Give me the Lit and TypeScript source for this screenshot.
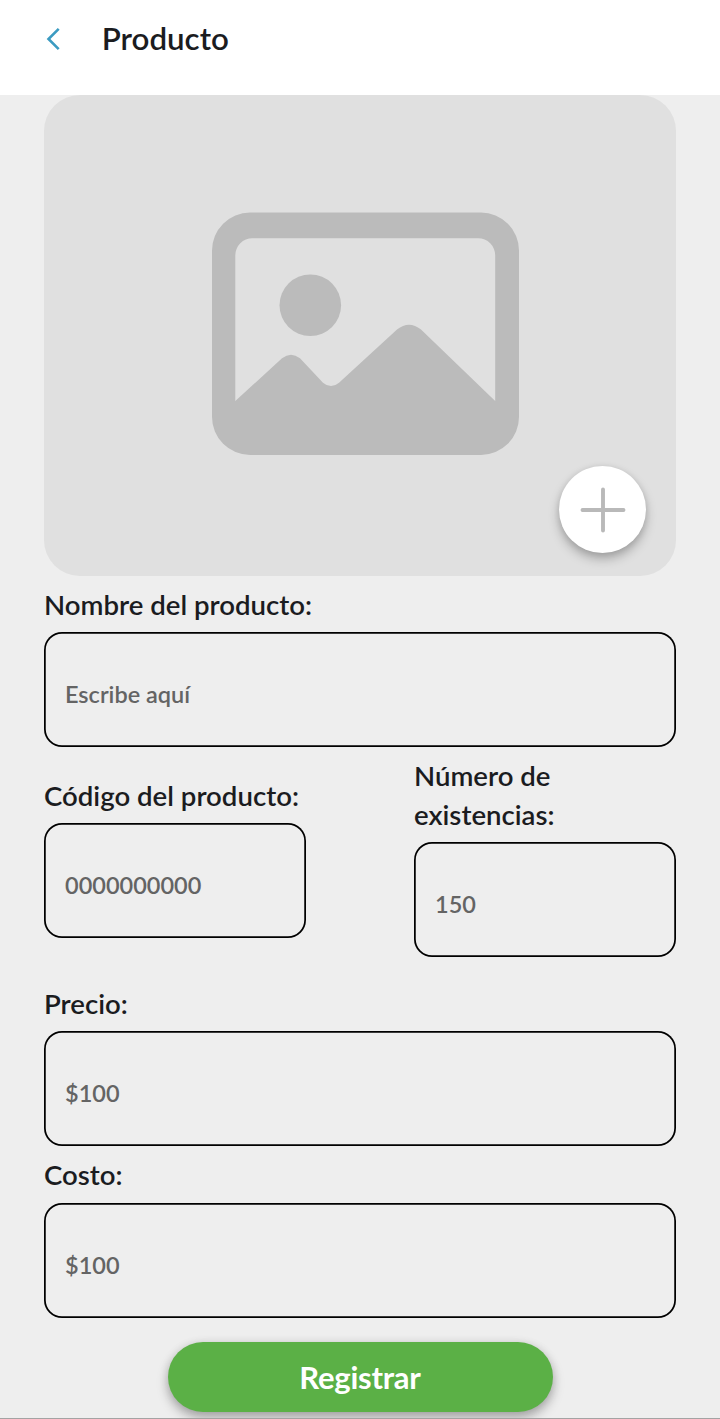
import { LitElement, html, css } from "lit";
import { customElement, property } from "lit/decorators.js";

@customElement("form-field")
class FormField extends LitElement {
  @property() label = "";
  @property() placeholder = "";

  static styles = css`
    :host { display: block; }
    .label {
      display: block;
      margin-bottom: var(--label-gap, 8px);
      font-size: 27.6px;
      font-weight: 600;
      line-height: 39px;
      color: #1b1c1f;
    }
    .input {
      display: block;
      box-sizing: border-box;
      width: 100%;
      height: 115px;
      margin: 0;
      padding: 9px 21px 0;
      border: 0;
      border-radius: 18px;
      outline: none;
      background: transparent;
      box-shadow: inset 0 0 0 1.75px #000;
      font: 600 23.5px Lato, sans-serif;
      color: #1b1c1f;
    }
    .input::placeholder { color: #646464; opacity: 1; }
  `;

  render() {
    return html`
      <label class="label" for="control">${this.label}</label>
      <input class="input" id="control" placeholder=${this.placeholder} />
    `;
  }
}

@customElement("app-root")
class AppRoot extends LitElement {
  static styles = css`
    :host {
      display: flex;
      flex-direction: column;
      box-sizing: border-box;
      height: 1419px;
      overflow: hidden;
      background: #eeeeee;
      border-bottom: 1px solid #a3a3a3;
      font-family: Lato, sans-serif;
    }
    .header {
      display: flex;
      flex: none;
      align-items: center;
      box-sizing: border-box;
      height: 95px;
      padding: 0 46px 17px;
      background: #fff;
    }
    .back { display: block; width: 16px; height: 24px; }
    .title {
      margin: 0 0 2px 39.7px;
      font-size: 31.3px;
      font-weight: 600;
      line-height: 40px;
      color: #1b1c1f;
    }
    .body {
      display: flex;
      flex-direction: column;
      flex: none;
      padding: 0 44px;
    }
    .photo {
      position: relative;
      height: 481px;
      margin-bottom: 9px;
      border-radius: 36px;
      background: #e0e0e0;
    }
    .picture { display: block; width: 307px; height: 243px; padding: 117px 0 0 168px; }
    .add {
      position: absolute;
      right: 29.7px;
      bottom: 22.8px;
      display: grid;
      place-items: center;
      width: 87.3px;
      height: 87.3px;
      padding: 0;
      border: 0;
      border-radius: 50%;
      background: #fff;
      box-shadow: 0 6px 11px rgba(0, 0, 0, 0.26), 0 1px 6px rgba(0, 0, 0, 0.09);
    }
    .plus { display: block; width: 46px; height: 46px; }
    .pair {
      display: grid;
      grid-template-columns: 262px 262px;
      justify-content: space-between;
      align-items: center;
      margin: 9px 0 27px;
    }
    .code { padding-top: 1px; }
    .cost { margin-top: 9px; --label-gap: 9px; }
    .submit {
      align-self: center;
      width: 385px;
      height: 70px;
      margin-top: 24px;
      padding: 0;
      border: 0;
      border-radius: 35px;
      background: #5bb046;
      box-shadow: 0 6px 12px rgba(0, 0, 0, 0.28), 0 1px 10px rgba(0, 0, 0, 0.1);
      font: 700 31px/40px Lato, sans-serif;
      letter-spacing: -0.25px;
      color: #fff;
    }
  `;

  render() {
    return html`
      <header class="header">
        <svg class="back" viewBox="0 0 16 24" fill="none" stroke="#3b9bc1" stroke-width="2.6">
          <path d="M12.7 1.8 2.5 12l10.2 10.2" />
        </svg>
        <h1 class="title">Producto</h1>
      </header>
      <main class="body">
        <div class="photo">
          <svg class="picture" viewBox="0 0 307 243" fill="#bbbbbb">
            <path
              fill-rule="evenodd"
              d="M38 0.5H269A38 38 0 0 1 307 38.5V205A38 38 0 0 1 269 243H38A38 38 0 0 1 0 205V38.5A38 38 0 0 1 38 .5Z
                 M40.5 26.3A17 17 0 0 0 23.3 43.5V189L70 146.3Q79 139 88 146.3L111 170.7Q119 177.5 127 170.7L185 117.6Q197 107.8 209 117.6L283.2 189V43.5A17 17 0 0 0 266 26.3Z"
            />
            <circle cx="98.3" cy="93.2" r="30.8" />
          </svg>
          <button class="add" aria-label="+">
            <svg class="plus" viewBox="0 0 46 46" stroke="#b9b9b9" stroke-width="3.9" stroke-linecap="round">
              <path d="M2.5 23H43.5M23 2.5V43.5" />
            </svg>
          </button>
        </div>
        <form-field label="Nombre del producto:" placeholder="Escribe aquí"></form-field>
        <div class="pair">
          <form-field class="code" label="Código del producto:" placeholder="0000000000"></form-field>
          <form-field label="Número de existencias:" placeholder="150"></form-field>
        </div>
        <form-field label="Precio:" placeholder="$100"></form-field>
        <form-field class="cost" label="Costo:" placeholder="$100"></form-field>
        <button class="submit">Registrar</button>
      </main>
    `;
  }
}
